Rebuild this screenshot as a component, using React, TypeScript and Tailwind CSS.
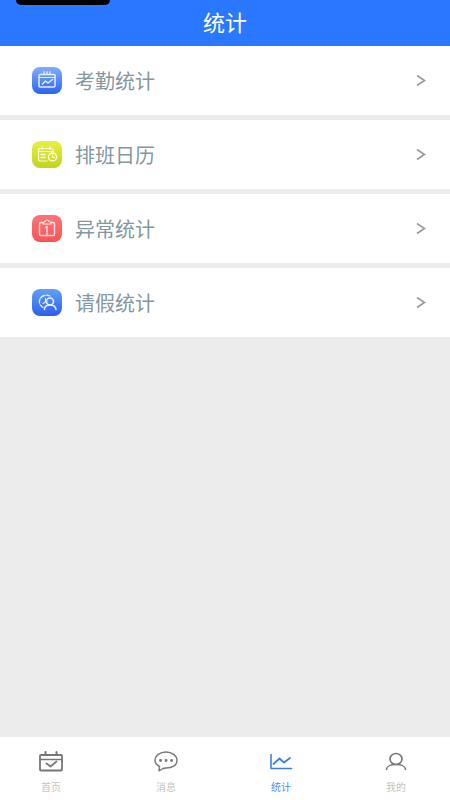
import React from 'react';

interface StatItem {
  label: string;
  tile: string;
  icon: React.ReactNode;
}

interface TabItem {
  label: string;
  active?: boolean;
  icon: React.ReactNode;
}

const statItems: StatItem[] = [
  {
    label: '考勤统计',
    tile: 'bg-linear-to-b from-[#82acff] to-[#2c62f2]',
    icon: (
      <>
        <rect x="7" y="7.5" width="16" height="12.5" rx="1" strokeWidth="1.5" />
        <path d="M7 10.5h16" />
        <path d="M12 4.5v2M15 4.5v2M18 4.5v2" />
        <path d="M10.5 17l3-3 2.5 2 4.5-3.5" strokeWidth="1.5" />
      </>
    ),
  },
  {
    label: '排班日历',
    tile: 'bg-linear-to-b from-[#e9f03c] to-[#c3d41c]',
    icon: (
      <>
        <path d="M15 20H8.500q-2 0-2-2V8.500q0-1 1-1h12q1.500 0 1.500 1.500v2" />
        <path d="M6.500 10.500H21M10 5.500v3M18 5.500v3" />
        <path d="M9 13.500h4M9 16.500h4" strokeWidth="1.600" />
        <circle cx="20.5" cy="16" r="4" strokeWidth="1.500" />
        <path d="M20.500 14V16.500h2" />
      </>
    ),
  },
  {
    label: '异常统计',
    tile: 'bg-linear-to-b from-[#ff7476] to-[#fb5055]',
    icon: (
      <>
        <path d="M11 7.500H9Q7.500 7.500 7.500 9v10.500q0 1 1 1h13q1 0 1-1V9q0-1.500-1.500-1.500h-2" strokeWidth="1.400" />
        <path d="M11 9V7.500l2-1q.500-1.500 2-1.500t2 1.500l2 1V9z" />
        <path d="M14 12.500l1-1v5.500M15 18.800v.2" strokeWidth="1.600" />
      </>
    ),
  },
  {
    label: '请假统计',
    tile: 'bg-linear-to-b from-[#62a0f8] to-[#315cf0]',
    icon: (
      <>
        <path d="M18 7A6.500 6 0 1 0 11 18.500" strokeWidth="1.400" strokeDasharray="4 1.800" />
        <path d="M13.500 9.500v3.500l-2.500 1.500" />
        <circle cx="18" cy="12.5" r="3.5" strokeWidth="1.600" />
        <path d="M12.500 20.500q0-4.500 5.500-4.500t6 4.500" strokeWidth="1.600" />
      </>
    ),
  },
];

const tabs: TabItem[] = [
  {
    label: '首页',
    icon: (
      <>
        <rect x="3" y="6" width="22" height="15.5" rx="1" strokeWidth="1.800" />
        <path d="M3 10.500h22" strokeWidth="1.400" />
        <path d="M8.500 3v3M19.500 3v3" strokeWidth="2" />
        <path d="M9.500 14.500l4 3 6-5" strokeWidth="1.800" />
      </>
    ),
  },
  {
    label: '消息',
    icon: (
      <>
        <path
          d="M7.500 17.500C4.500 16 3 14 3 11.500 3 6.500 8 3 14 3s11 3.500 11 8.500-5 7.500-11 7.500c-1.200 0-2 0-3 .5L7 22z"
          strokeWidth="1.400"
        />
        <path d="M8.500 11.500h.1M14 11.500h.1M19.500 11.500h.1" strokeWidth="2.800" />
      </>
    ),
  },
  {
    label: '统计',
    active: true,
    icon: (
      <>
        <path d="M4 5.500v14h20.500" />
        <path d="M6.500 15l6-5.500 4.500 4 6-4.500" strokeWidth="1.800" />
      </>
    ),
  },
  {
    label: '我的',
    icon: (
      <>
        <ellipse cx="14" cy="10" rx="6" ry="5.5" />
        <path d="M4.500 20.500c0-3 4-5 9.500-5s9.500 2 9.500 5" />
      </>
    ),
  },
];

const Header: React.FC = () => (
  <header className="relative flex h-[46px] items-center justify-center overflow-hidden bg-[#2a78ff] pb-1">
    <div className="absolute left-4 top-0 h-[5px] w-[94px] rounded-b-full bg-black" />
    <h1 className="text-[22px] leading-6 text-white">统计</h1>
  </header>
);

const StatRow: React.FC<{ item: StatItem }> = ({ item }) => (
  <li>
    <a href="#" className="flex h-[69px] items-center bg-white pl-8 pr-6">
      <span className={`flex h-[27px] w-[30px] items-center justify-center rounded-lg ${item.tile}`}>
        <svg
          viewBox="0 0 30 27"
          className="h-full w-full"
          fill="none"
          stroke="white"
          strokeWidth="1.2"
          strokeOpacity="0.85"
          strokeLinecap="round"
          strokeLinejoin="round"
        >
          {item.icon}
        </svg>
      </span>
      <span className="ml-[13px] flex-1 text-xl leading-6 text-[#83979f]">{item.label}</span>
      <svg viewBox="0 0 10 12" className="h-3 w-2.5" fill="none" stroke="#999999" strokeWidth="1.6">
        <path d="M1 0.5l7.500 5L1 10.500" />
      </svg>
    </a>
  </li>
);

const TabBar: React.FC = () => (
  <nav className="flex h-[63px] justify-between bg-white pl-[31px] pr-[34px] pt-3">
    {tabs.map(tab => (
      <a
        key={tab.label}
        href="#"
        className={`flex w-10 flex-col items-center ${tab.active ? 'text-[#3d7eef]' : 'text-[#777777]'}`}
      >
        <svg
          viewBox="0 0 28 26"
          className="h-[26px] w-7"
          fill="none"
          stroke="currentColor"
          strokeWidth="1.6"
          strokeLinecap="round"
          strokeLinejoin="round"
        >
          {tab.icon}
        </svg>
        <span className={`mt-1 text-[10px] leading-4 ${tab.active ? 'text-[#4b8df5]' : 'text-[#c4c4c4]'}`}>
          {tab.label}
        </span>
      </a>
    ))}
  </nav>
);

const App: React.FC = () => {
  return (
    <div className="flex min-h-screen flex-col bg-[#ececec] font-['Noto_Sans_CJK_SC',sans-serif]">
      <Header />
      <main className="flex-1">
        <ul className="flex flex-col gap-[5px]">
          {statItems.map(item => (
            <StatRow key={item.label} item={item} />
          ))}
        </ul>
      </main>
      <TabBar />
    </div>
  );
};

export default App;
